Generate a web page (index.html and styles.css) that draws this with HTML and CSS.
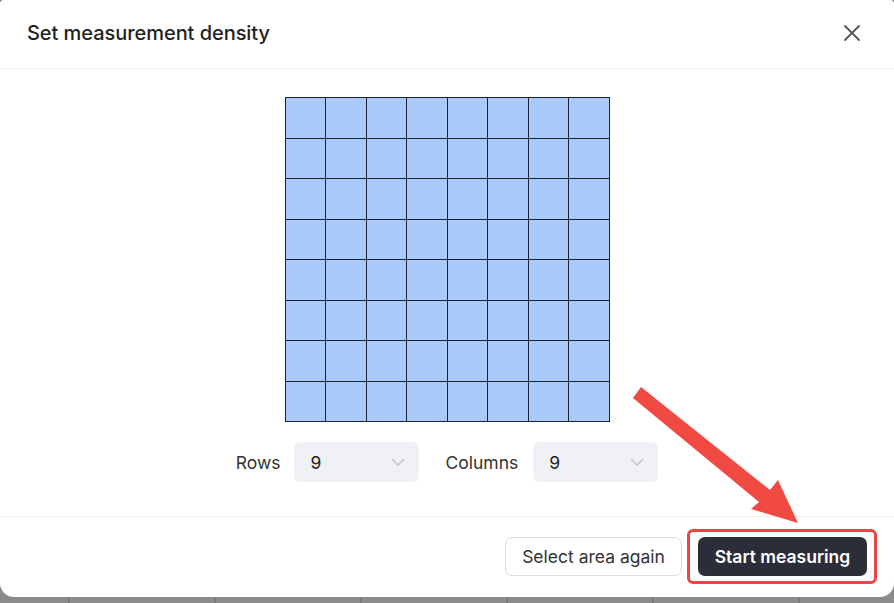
FILE: index.html
```html
<!DOCTYPE html>
<html>
<head>
<meta charset="utf-8">
<link rel="stylesheet" href="styles.css">
</head>
<body>
<div class="modal">
  <div class="header">
    <div class="title">Set measurement density</div>
    <svg class="close" width="18" height="18" viewBox="0 0 18 18"><path d="M2 2L16 16M16 2L2 16" stroke="#555" stroke-width="1.8" stroke-linecap="round"/></svg>
  </div>
  <div class="body">
    <div class="grid">
      <i></i><i></i><i></i><i></i><i></i><i></i><i></i><i></i>
      <i></i><i></i><i></i><i></i><i></i><i></i><i></i><i></i>
      <i></i><i></i><i></i><i></i><i></i><i></i><i></i><i></i>
      <i></i><i></i><i></i><i></i><i></i><i></i><i></i><i></i>
      <i></i><i></i><i></i><i></i><i></i><i></i><i></i><i></i>
      <i></i><i></i><i></i><i></i><i></i><i></i><i></i><i></i>
      <i></i><i></i><i></i><i></i><i></i><i></i><i></i><i></i>
      <i></i><i></i><i></i><i></i><i></i><i></i><i></i><i></i>
    </div>
    <div class="controls">
      <span class="label">Rows</span>
      <div class="select"><span>9</span><svg width="14" height="8" viewBox="0 0 14 8"><path d="M1 1L7 7L13 1" fill="none" stroke="#bfc2c8" stroke-width="1.3"/></svg></div>
      <span class="label label2">Columns</span>
      <div class="select"><span>9</span><svg width="14" height="8" viewBox="0 0 14 8"><path d="M1 1L7 7L13 1" fill="none" stroke="#bfc2c8" stroke-width="1.3"/></svg></div>
    </div>
  </div>
  <div class="footer">
    <button class="btn secondary">Select area again</button>
    <div class="highlight"><button class="btn primary">Start measuring</button></div>
  </div>
  <svg class="arrow" width="894" height="603" viewBox="0 0 894 603">
    <polygon points="641,387 633,398 759,502 751,509 798,523 778,480 770,490" fill="#f04a43"/>
  </svg>
</div>
<div class="backdrop-lines"></div>
</body>
</html>
```
FILE: styles.css
```css
html, body {
  margin: 0;
  padding: 0;
}
body {
  width: 894px;
  height: 603px;
  overflow: hidden;
  background: #8b8b8b;
  font-family: Inter, "Noto Sans", sans-serif;
  position: relative;
}
.modal {
  position: relative;
  width: 894px;
  height: 597px;
  background: #fff;
  border-radius: 4px 4px 14px 14px;
  display: flex;
  flex-direction: column;
}
.header {
  height: 69px;
  box-sizing: border-box;
  border-bottom: 1px solid #ececec;
  display: flex;
  align-items: center;
  justify-content: space-between;
  padding: 0 33px 2px 27px;
}
.title {
  font-size: 20px;
  font-weight: 500;
  color: #1f1f1f;
  letter-spacing: -0.05px;
}
.close {
  display: block;
}
.body {
  flex: 1;
  display: flex;
  flex-direction: column;
  align-items: center;
  padding-top: 28px;
  border-bottom: 1px solid #ececec;
}
.grid {
  width: 325px;
  height: 325px;
  box-sizing: border-box;
  padding: 1px;
  gap: 1px;
  background: #1b2232;
  display: grid;
  grid-template-columns: repeat(8, 1fr);
  grid-template-rows: repeat(8, 1fr);
}
.grid i {
  background: #a9c9fa;
}
.controls {
  margin-top: 20px;
  display: flex;
  align-items: center;
}
.label {
  font-size: 17.5px;
  color: #333;
  margin-right: 14px;
}
.label2 {
  margin-left: 26px;
  margin-right: 15px;
}
.select {
  width: 125px;
  height: 40px;
  box-sizing: border-box;
  background: #f0f1f4;
  border-radius: 6px;
  display: flex;
  align-items: center;
  justify-content: space-between;
  padding: 0 14px 0 16px;
  font-size: 17.5px;
  color: #222;
}
.select svg {
  display: block;
}
.footer {
  height: 80px;
  display: flex;
  align-items: center;
  justify-content: flex-end;
  padding-right: 17px;
  padding-bottom: 1px;
  box-sizing: border-box;
}
.btn {
  font-family: Inter, "Noto Sans", sans-serif;
  font-size: 17.5px;
  height: 39px;
  border-radius: 7px;
  cursor: pointer;
  padding: 0;
}
.secondary {
  width: 177px;
  background: #fff;
  border: 1px solid #dcdcdc;
  color: #333;
  font-weight: 400;
  margin-right: 5px;
}
.highlight {
  border: 3px solid #ea4646;
  border-radius: 6px;
  padding: 5px 7px 5px 8px;
  display: flex;
}
.primary {
  width: 169px;
  background: #2b2d38;
  border: none;
  color: #fff;
  font-weight: 600;
}
.arrow {
  position: absolute;
  left: 0;
  top: 0;
  pointer-events: none;
}
.backdrop-lines {
  position: absolute;
  left: 0;
  top: 598px;
  width: 894px;
  height: 5px;
  background: repeating-linear-gradient(90deg, transparent 0 68px, #7a7a7a 68px 70px, transparent 70px 146px);
}
```
